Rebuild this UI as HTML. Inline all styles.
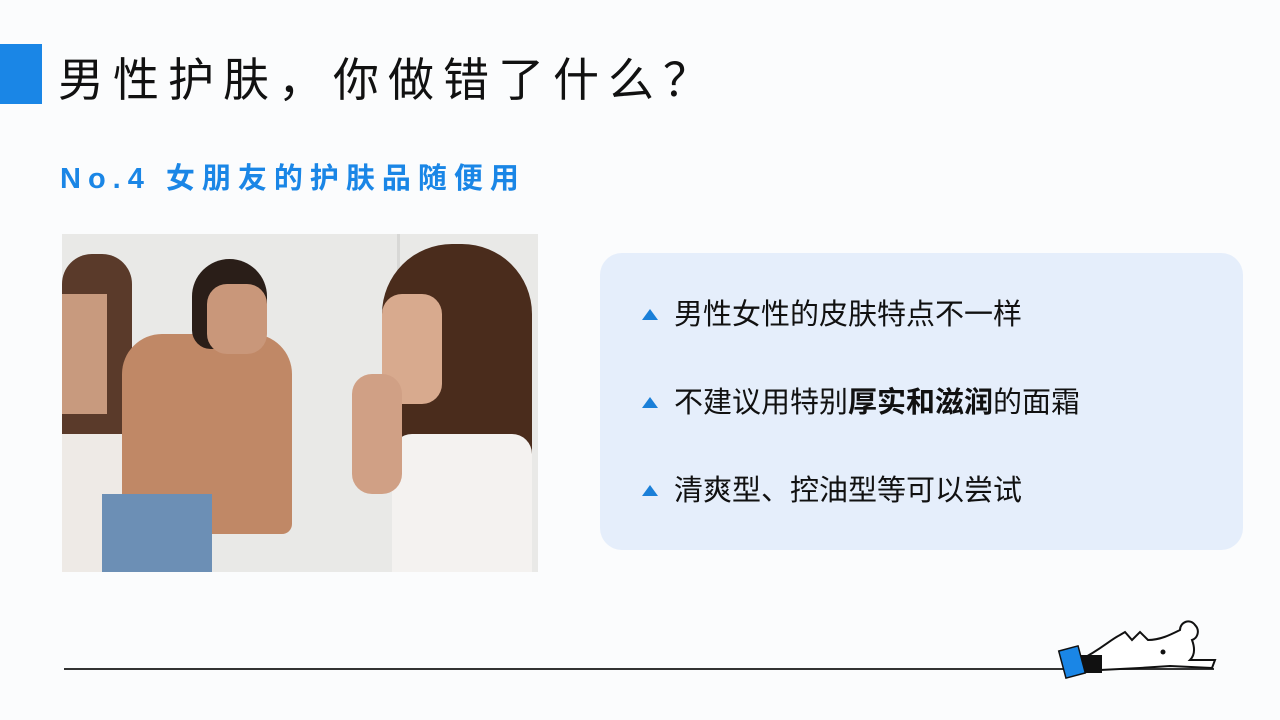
<!DOCTYPE html>
<html><head><meta charset="utf-8"><style>
*{margin:0;padding:0;box-sizing:border-box}
body{width:1280px;height:720px;background:#fbfcfd;position:relative;overflow:hidden;font-family:"Liberation Sans","Noto Sans CJK SC",sans-serif}
.bar{position:absolute;left:0;top:44px;width:42px;height:60px;background:#1a86e6}
h1{position:absolute;left:58px;top:48px;font-size:46px;font-weight:400;color:#111;letter-spacing:9px;line-height:64px;white-space:nowrap}
h2{position:absolute;left:60px;top:159px;font-size:29px;font-weight:700;color:#1a86e6;letter-spacing:7px;line-height:40px;white-space:nowrap}
.photo{position:absolute;left:62px;top:234px;width:476px;height:338px;background:#e9e9e7;overflow:hidden}
.photo div{position:absolute}
.card{position:absolute;left:600px;top:253px;width:643px;height:297px;background:#e5eefb;border-radius:22px}
.item{position:absolute;left:674px;font-size:29px;color:#111;line-height:36px;white-space:nowrap}
.tri{position:absolute;left:642px;width:0;height:0;border-left:8px solid transparent;border-right:8px solid transparent;border-bottom:11px solid #1a7fd8}
.line{position:absolute;left:64px;top:668px;width:1150px;height:2px;background:#333}
</style></head><body>
<div class="bar"></div>
<h1>男性护肤，你做错了什么？</h1>
<h2>No.4 女朋友的护肤品随便用</h2>
<div class="photo">
  <div style="left:335px;top:0;width:3px;height:338px;background:#d8d8d6"></div>
  <div style="left:0;top:20px;width:70px;height:318px;background:#5a3a2a;border-radius:30px 30px 0 0"></div>
  <div style="left:0;top:60px;width:45px;height:120px;background:#c89a7e"></div>
  <div style="left:0;top:200px;width:60px;height:138px;background:#eeeae6"></div>
  <div style="left:60px;top:100px;width:170px;height:200px;background:#c08866;border-radius:40px 40px 10px 10px"></div>
  <div style="left:130px;top:25px;width:75px;height:90px;background:#2a1e18;border-radius:40px 40px 20px 20px"></div>
  <div style="left:145px;top:50px;width:60px;height:70px;background:#c9977a;border-radius:20px"></div>
  <div style="left:40px;top:260px;width:110px;height:78px;background:#6c8fb5"></div>
  <div style="left:320px;top:10px;width:150px;height:230px;background:#4a2c1c;border-radius:70px 70px 20px 20px"></div>
  <div style="left:320px;top:60px;width:60px;height:110px;background:#d8aa8e;border-radius:20px"></div>
  <div style="left:330px;top:200px;width:140px;height:138px;background:#f4f2f0;border-radius:20px 20px 0 0"></div>
  <div style="left:290px;top:140px;width:50px;height:120px;background:#d0a085;border-radius:20px"></div>
</div>
<div class="card"></div>
<div class="tri" style="top:309px"></div><div class="item" style="top:297px">男性女性的皮肤特点不一样</div>
<div class="tri" style="top:397px"></div><div class="item" style="top:385px">不建议用特别<b>厚实和滋润</b>的面霜</div>
<div class="tri" style="top:485px"></div><div class="item" style="top:473px">清爽型、控油型等可以尝试</div>
<div class="line"></div>
<svg style="position:absolute;left:1040px;top:610px" width="200" height="80" viewBox="0 0 200 80">
<path d="M40 50 C60 40 70 30 80 25 L85 22 L92 30 L100 22 L108 30 C120 30 130 25 140 20 C140 12 150 8 155 15 C160 20 158 28 152 30 C155 38 155 45 150 50 L175 50 L172 58 L130 56 L100 58 L60 60" fill="#fff" stroke="#111" stroke-width="2"/>
<circle cx="123" cy="42" r="2.5" fill="#111"/>
<rect x="40" y="45" width="22" height="18" fill="#111"/>
<rect x="22" y="38" width="20" height="28" fill="#1a86e6" stroke="#111" stroke-width="1.5" transform="rotate(-15 32 52)"/>
</svg>
</body></html>
